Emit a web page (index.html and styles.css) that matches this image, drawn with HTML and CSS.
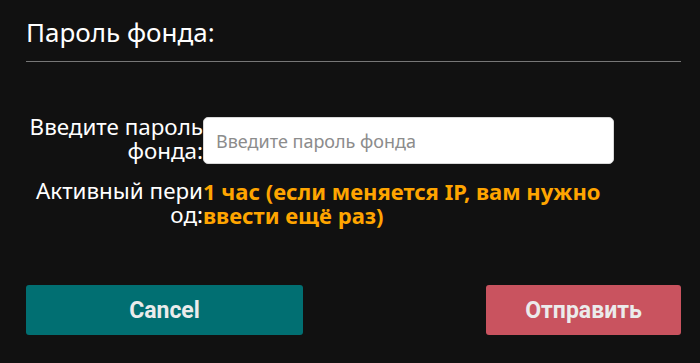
FILE: index.html
```html
<!DOCTYPE html>
<html lang="ru">
<head>
<meta charset="utf-8">
<title>Пароль фонда</title>
<link rel="stylesheet" href="styles.css">
</head>
<body>
<div class="dialog">
  <h2 class="title">Пароль фонда:</h2>
  <div class="divider"></div>
  <div class="form">
    <label class="label" for="pw">Введите пароль фонда:</label>
    <div class="field"><input id="pw" class="input" type="password" placeholder="Введите пароль фонда"></div>
    <div class="label label-break">Активный период:</div>
    <div class="value">1 час (если меняется IP, вам нужно ввести ещё раз)</div>
  </div>
  <div class="actions">
    <button class="btn btn-cancel">Cancel</button>
    <button class="btn btn-send">Отправить</button>
  </div>
</div>
</body>
</html>
```
FILE: styles.css
```css
html, body {
  margin: 0;
  padding: 0;
  background: #111111;
  height: 100%;
}
.dialog {
  width: 655px;
  margin-left: 26px;
  font-family: "Noto Sans", "Open Sans", sans-serif;
  color: #ffffff;
}
.title {
  margin: 0;
  padding-top: 16px;
  height: 61px;
  box-sizing: border-box;
  font-size: 26px;
  font-weight: 400;
  line-height: 32px;
}
.divider {
  border-top: 1px solid #777777;
}
.form {
  display: grid;
  grid-template-columns: 177px 411px;
  row-gap: 15px;
  padding-top: 53px;
}
.label {
  font-size: 22.4px;
  line-height: 24px;
  text-align: right;
  padding-left: 1px;
  color: #ffffff;
}
.label-break {
  word-break: break-all;
}
.field {
  display: flex;
  padding-top: 2px;
}
.input {
  width: 100%;
  height: 47px;
  box-sizing: border-box;
  border: 1px solid #d8d8d8;
  border-radius: 5px;
  background: #ffffff;
  padding: 0 12px;
  font-family: "Noto Sans", "Open Sans", sans-serif;
  font-size: 18px;
  color: #333;
  outline: none;
}
.input::placeholder {
  color: #8c8c8c;
}
.value {
  font-size: 22px;
  line-height: 24px;
  font-weight: 700;
  color: #ffa500;
}
.actions {
  display: flex;
  justify-content: space-between;
  margin-top: 58px;
}
.btn {
  height: 50px;
  border: none;
  border-radius: 3px;
  font-family: Roboto, "Liberation Sans", sans-serif;
  font-weight: 700;
  font-size: 23px;
  color: #ebebeb;
  cursor: pointer;
}
.btn-cancel {
  width: 277px;
  background: #016f72;
}
.btn-send {
  width: 195px;
  background: #c9535f;
}
```
